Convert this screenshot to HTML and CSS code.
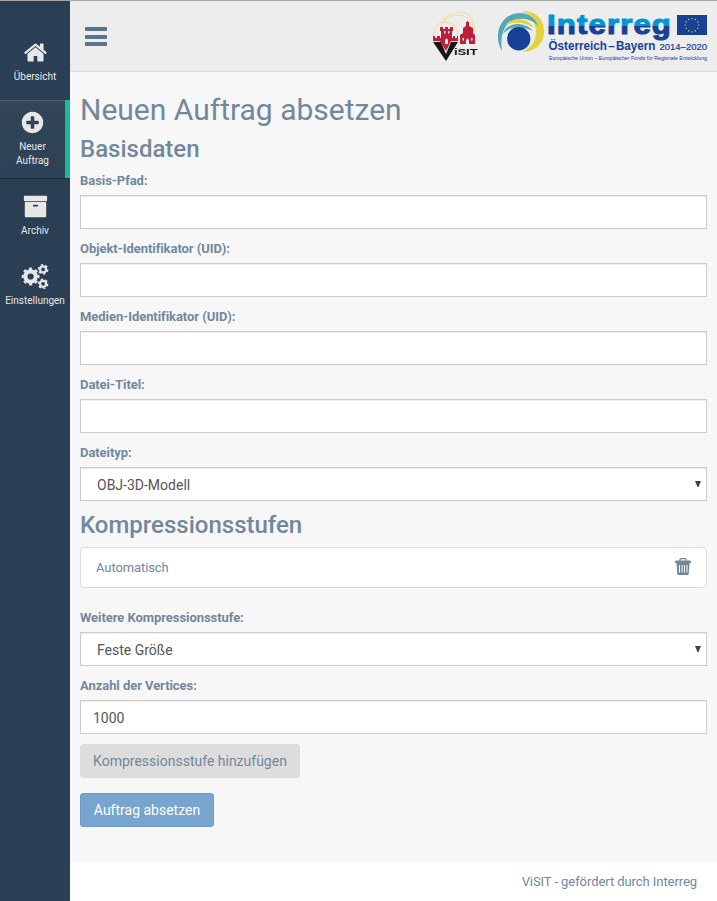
FILE: index.html
```html
<!DOCTYPE html>
<html lang="de">
<head>
<meta charset="utf-8">
<title>ViSIT - Neuer Auftrag</title>
<link rel="stylesheet" href="styles.css">
</head>
<body>
<div class="layout">
  <nav class="sidebar">
    <a class="nav-item">
      <svg class="nav-icon" viewBox="-64 0 1792 1792"><path d="M1408 992v480q0 26-19 45t-45 19h-384v-384h-256v384h-384q-26 0-45-19t-19-45v-480q0-1 .5-3t.5-3l575-474 575 474q1 2 1 6zm223-69l-62 74q-8 9-21 11h-3q-13 0-21-7l-692-577-692 577q-12 8-24 7-13-2-21-11l-62-74q-8-10-7-23.5t11-21.5l719-599q32-26 76-26t76 26l244 204v-195q0-14 9-23t23-9h192q14 0 23 9t9 23v408l219 182q10 8 11 21.5t-7 23.5z"/></svg>
      <span>Übersicht</span>
    </a>
    <a class="nav-item active">
      <svg class="nav-icon" viewBox="0 0 1792 1792"><path d="M1344 960v-128q0-26-19-45t-45-19h-256v-256q0-26-19-45t-45-19h-128q-26 0-45 19t-19 45v256h-256q-26 0-45 19t-19 45v128q0 26 19 45t45 19h256v256q0 26 19 45t45 19h128q26 0 45-19t19-45v-256h256q26 0 45-19t19-45zm320-64q0 209-103 385.5t-279.5 279.5-385.5 103-385.5-103-279.5-279.5-103-385.5 103-385.5 279.5-279.5 385.5-103 385.5 103 279.5 279.5 103 385.5z"/></svg>
      <span>Neuer<br>Auftrag</span>
    </a>
    <a class="nav-item">
      <svg class="nav-icon" viewBox="0 0 1792 1792"><path d="M1088 832q0-26-19-45t-45-19h-256q-26 0-45 19t-19 45 19 45 45 19h256q26 0 45-19t19-45zm576-192v960q0 26-19 45t-45 19h-1408q-26 0-45-19t-19-45v-960q0-26 19-45t45-19h1408q26 0 45 19t19 45zm64-448v256q0 26-19 45t-45 19h-1536q-26 0-45-19t-19-45v-256q0-26 19-45t45-19h1536q26 0 45 19t19 45z"/></svg>
      <span>Archiv</span>
    </a>
    <a class="nav-item">
      <svg class="nav-icon cogs" viewBox="0 0 28 25">
        <g fill="none" stroke="#e7e7e7">
          <circle cx="9.6" cy="12.5" r="5.2" stroke-width="4.2"/>
          <circle cx="9.6" cy="12.5" r="7.8" stroke-width="2.2" pathLength="16" stroke-dasharray="1 1" stroke-dashoffset=".5"/>
          <circle cx="22.1" cy="5.4" r="3" stroke-width="2.2"/>
          <circle cx="22.1" cy="5.4" r="4.6" stroke-width="1.5" pathLength="12" stroke-dasharray="1 1"/>
          <circle cx="22.1" cy="19.8" r="3" stroke-width="2.2"/>
          <circle cx="22.1" cy="19.8" r="4.6" stroke-width="1.5" pathLength="12" stroke-dasharray="1 1"/>
        </g>
      </svg>
      <span>Einstellungen</span>
    </a>
  </nav>
  <div class="page">
    <header class="topbar">
      <div class="menu-toggle"><i></i><i></i><i></i></div>
      <div class="logos">
        <svg class="visit-logo" viewBox="430 8 50 54">
          <g fill="none" stroke="#f3d98a" stroke-width=".9">
            <path d="M433.500 36V33a12 11 0 0 1 24 0v4"/>
            <path d="M441 27a17 14 0 0 1 25-10q5 3 8 10"/>
            <path d="M443 20q8-9 20-8 11 2 12 20"/>
          </g>
          <path d="M433 42h8l5 12 5-12h7l-12 19z" fill="#171717"/>
          <path fill="#bd1e3c" d="M433 36h2v2h2v-2h3v2h1v-7h-1v-4h3v2h2v-2h3v2h2v-2h3v4h-1v7h1v-2h2v2h2v-2h1v5h-7l-5 10-6-10h-7zM460 35l3-2v-5l3-2v-4h1v-1h1v1h1v4l4 2v5l2 2v9h-15z"/>
          <path fill="#ededed" d="M444 31h1.500v2.500h-1.500zM448 31h1.500v2.500h-1.500zM445 44v-4q1.500-3 3 0v4zM466 44v-4q1.500-3 3 0v4zM462.500 38h1.500v2.500h-1.500zM471 38h1.500v2.500h-1.500z"/>
          <text x="454" y="55" class="visit-text" textLength="23.500" lengthAdjust="spacingAndGlyphs">iSIT</text>
        </svg>
        <svg class="interreg-logo" viewBox="496 8 213 56">
          <defs>
            <linearGradient id="split" gradientUnits="userSpaceOnUse" x1="0" y1="14" x2="0" y2="38">
              <stop offset=".5" stop-color="#0096d5"/><stop offset=".5" stop-color="#164194"/>
            </linearGradient>
          </defs>
          <path fill="#e3d43f" d="M521 11.100C536 10 544 20 544 31c0 13-9 21-22 21 9-4 14-11 14-20 0-11-8-20-15-20.900z"/>
          <path fill="#52a9b5" d="M502 51C497 44 497 33 500 26c4-9 12-13 20-13 9 0 16 6 18 13-5-5-11-8-19-7-12 1-20 12-17 32z"/>
          <path fill="#e3d43f" d="M505 25c7-8 22-8 29 3-8-5-17-7-29-3z"/>
          <path fill="#52a9b5" d="M503 34c3-11 20-14 30-3-9-4-23-6-30 3z"/>
          <circle cx="518.700" cy="38.700" r="11.700" fill="#164194"/>
          <text x="547" y="34.300" class="brand" fill="url(#split)" stroke="url(#split)" textLength="125" lengthAdjust="spacingAndGlyphs">Interreg</text>
          <text x="548.500" y="50" class="region" textLength="107" lengthAdjust="spacingAndGlyphs">Österreich – Bayern</text>
          <text x="659.500" y="50" class="years" textLength="47.500" lengthAdjust="spacingAndGlyphs">2014–2020</text>
          <text x="549" y="60" class="fund" textLength="158" lengthAdjust="spacingAndGlyphs">Europäische Union – Europäischer Fonds für Regionale Entwicklung</text>
          <rect x="677" y="15" width="30" height="20" fill="#164194"/>
          <circle cx="692" cy="25.200" r="6.600" fill="none" stroke="#d8cf45" stroke-width="1.300" pathLength="24" stroke-dasharray=".7 1.300" stroke-dashoffset=".35"/>
        </svg>
      </div>
    </header>
    <main class="content">
      <h1>Neuen Auftrag absetzen</h1>
      <h2>Basisdaten</h2>
      <label>Basis-Pfad:</label>
      <div class="field"></div>
      <label>Objekt-Identifikator (UID):</label>
      <div class="field"></div>
      <label>Medien-Identifikator (UID):</label>
      <div class="field"></div>
      <label>Datei-Titel:</label>
      <div class="field"></div>
      <label>Dateityp:</label>
      <div class="field select"><span>OBJ-3D-Modell</span><svg viewBox="0 0 6 6"><path d="M0 0h6L3.500 6h-1z"/></svg></div>
      <h2 class="levels-title">Kompressionsstufen</h2>
      <div class="level">
        <span>Automatisch</span>
        <svg class="trash" viewBox="0 0 16 17">
          <path fill="none" stroke="#73879c" stroke-width="1.300" d="M5 3V1.600q0-.9.900-.9h4.200q.9 0 .9.900V3"/>
          <path fill="#73879c" fill-rule="evenodd" d="M1 2.500h14l1 1V5H0V3.500zM1.500 5h13l-.8 11q-.1 1-1 1H3.300q-.9 0-1-1zM4 7v7.500h1V7zM6.600 7v7.500h1V7zM9 7v7.500h1V7zM11.500 7v7.500h1V7z"/>
        </svg>
      </div>
      <label>Weitere Kompressionsstufe:</label>
      <div class="field select"><span>Feste Größe</span><svg viewBox="0 0 6 6"><path d="M0 0h6L3.500 6h-1z"/></svg></div>
      <label>Anzahl der Vertices:</label>
      <div class="field last">1000</div>
      <button class="btn add">Kompressionsstufe hinzufügen</button>
      <button class="btn submit">Auftrag absetzen</button>
    </main>
    <footer>ViSIT - gefördert durch Interreg</footer>
  </div>
</div>
</body>
</html>
```
FILE: styles.css
```css
* { box-sizing: border-box; }
body {
  margin: 0;
  font: 13px/18.57px Roboto, sans-serif;
  color: #73879c;
  background: #2a3f54;
}
.layout { display: flex; height: 901px; border-top: 1px solid #a5a5a5; }
.sidebar { width: 70px; padding-top: 29px; background: #2a3f54; }
.nav-item {
  display: flex;
  flex-direction: column;
  align-items: center;
  height: 64px;
  margin-bottom: 6px;
  padding-top: 10px;
  color: #e7e7e7;
  font-size: 10px;
  line-height: 14px;
  text-align: center;
}
.nav-icon { width: 25px; height: 25px; margin-bottom: 5px; fill: #e7e7e7; flex: none; }
.nav-icon.cogs { width: 28px; }
.nav-item.active {
  height: 78px;
  border-right: 5px solid #1abb9c;
  background: linear-gradient(#334556, #2c4257);
  box-shadow: rgba(0, 0, 0, .25) 0 1px 0, inset rgba(255, 255, 255, .16) 0 1px 0;
}
.page { flex: 1; min-width: 0; display: flex; flex-direction: column; background: #f7f7f7; }
.topbar {
  height: 71px;
  display: flex;
  justify-content: space-between;
  border-bottom: 1px solid #d9dee4;
  background: #ededed;
  padding: 7px 8px 0 15px;
}
.menu-toggle { display: flex; flex-direction: column; gap: 3.5px; padding-top: 19px; }
.menu-toggle i { width: 22px; height: 4px; border-radius: 1px; background: #5a738e; }
.logos { display: flex; gap: 16px; }
.visit-logo { width: 50px; height: 54px; }
.interreg-logo { width: 213px; height: 56px; overflow: visible; }
.visit-text { font: 700 8.5px "Liberation Sans", sans-serif; fill: #171717; }
.brand { font: 700 27px "Liberation Sans", sans-serif; stroke-width: 1.1px; letter-spacing: 1px; }
.region { font: 700 12px "Liberation Sans", sans-serif; fill: #164194; word-spacing: -2px; }
.years { font: 9.5px "Liberation Sans", sans-serif; fill: #164194; stroke: #164194; stroke-width: .2px; }
.fund { font: 5.4px "Liberation Sans", sans-serif; fill: #164194; }
.content { flex: 1; padding: 21px 10px 0; }
h1 { margin: 0 0 10px; font-size: 30px; line-height: 33px; font-weight: 400; }
h2 { margin: 0 0 9px; font-size: 24px; line-height: 26px; font-weight: 500; }
label { display: block; height: 19px; margin-bottom: 5px; padding-top: 1px; font-weight: 700; letter-spacing: -.06px; }
.field {
  height: 34px;
  margin-bottom: 10px;
  padding: 0 12px;
  border: 1px solid #ccc;
  background: #fff;
  box-shadow: inset 0 1px 1px rgba(0, 0, 0, .075);
  color: #555;
  font-size: 14px;
  line-height: 34px;
}
.select { display: flex; justify-content: space-between; padding: 0 5px 0 16px; }
.select svg { width: 6px; height: 6px; margin-top: 13px; fill: #444; }
.levels-title { margin: 11px 0 9px; }
.level {
  display: flex;
  justify-content: space-between;
  height: 41px;
  margin-bottom: 20px;
  padding: 11px 15px 9px;
  border: 1px solid #ddd;
  border-radius: 4px;
  background: #fff;
  letter-spacing: -.1px;
}
.trash { width: 16px; height: 17px; margin-top: -1px; }
.btn {
  display: block;
  height: 34px;
  padding: 0 12px;
  border: 1px solid #ddd;
  border-radius: 3px;
  font: 14px/32px Roboto, sans-serif;
}
.add { width: 220px; margin-bottom: 15px; background: #ddd; color: #73879c; }
.submit { width: 134px; background: #78a5cf; border-color: #6d9cc8; color: #fff; }
footer { height: 39px; padding: 11px 20px 9px; background: #fff; text-align: right; letter-spacing: -.07px; }
```
